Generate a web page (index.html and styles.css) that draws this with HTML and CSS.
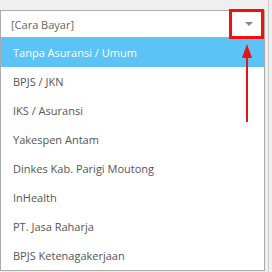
FILE: index.html
```html
<!DOCTYPE html>
<html lang="id">
<head>
  <meta charset="UTF-8" />
  <title>Cara Bayar</title>
  <link rel="stylesheet" href="styles.css">
</head>
<body>
  <div class="page">
    <div class="field">
      <div class="select">
        <span class="placeholder">[Cara Bayar]</span>
        <span class="caret"></span>
      </div>
      <ul class="options">
        <li class="active">Tanpa Asuransi / Umum</li>
        <li>BPJS / JKN</li>
        <li>IKS / Asuransi</li>
        <li>Yakespen Antam</li>
        <li>Dinkes Kab. Parigi Moutong</li>
        <li>InHealth</li>
        <li>PT. Jasa Raharja</li>
        <li>BPJS Ketenagakerjaan</li>
      </ul>
      <div class="mark"></div>
      <div class="pointer"></div>
    </div>
    <div class="gutter"></div>
  </div>
</body>
</html>
```

FILE: styles.css
```css
body {
  margin: 0;
  background: #efefef;
  font-family: 'Open Sans', sans-serif;
  font-size: 11px;
  color: #555;
}
.page {
  display: flex;
  height: 272px;
}
.field {
  position: relative;
  width: 265px;
  padding-top: 10px;
}
.select {
  height: 26px;
  border: 1px solid #aaa;
  background: #fff;
  display: flex;
  align-items: center;
  padding: 0 10px;
}
.placeholder {
  flex-grow: 1;
  color: #666;
}
.caret {
  width: 0;
  height: 0;
  border-left: 4px solid transparent;
  border-right: 4px solid transparent;
  border-top: 4px solid #888;
  margin-right: 1px;
}
.options {
  list-style: none;
  margin: 0;
  padding: 0;
  background: #fff;
  border: 1px solid #aaa;
  border-top: none;
}
.options li {
  height: 29px;
  line-height: 29px;
  padding: 0 12px;
  white-space: nowrap;
}
.options li.active {
  background: #5bc3f5;
  color: #fff;
}
.gutter {
  width: 3px;
  border-right: 1px solid #ccc;
}
.mark {
  position: absolute;
  left: 229px;
  top: 9px;
  width: 29px;
  height: 24px;
  border: 3px solid #f01010;
}
.pointer {
  position: absolute;
  left: 246px;
  top: 58px;
  width: 2px;
  height: 64px;
  background: #e81414;
}
.pointer::before {
  content: "";
  position: absolute;
  left: -4px;
  top: -14px;
  border-left: 5px solid transparent;
  border-right: 5px solid transparent;
  border-bottom: 14px solid #e81414;
}
```
